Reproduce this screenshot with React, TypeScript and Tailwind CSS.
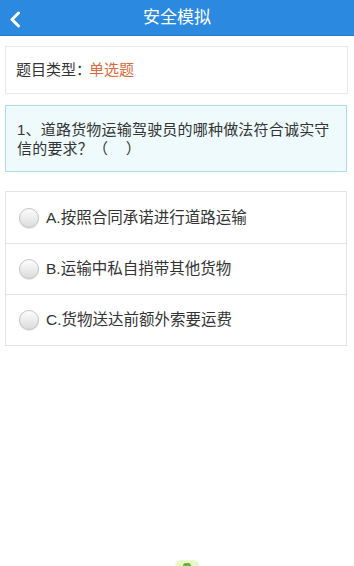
const font = { fontFamily: '"Liberation Sans", "Noto Sans CJK SC", sans-serif' };

const options = [
  'A.按照合同承诺进行道路运输',
  'B.运输中私自捎带其他货物',
  'C.货物送达前额外索要运费',
];

const Radio = () => (
  <span className="block w-[20px] h-[20px] rounded-full border border-[#c4c4c4] bg-gradient-to-b from-[#fdfdfd] to-[#dcdcdc] shadow-[0_1px_1px_rgba(0,0,0,0.12)] shrink-0" />
);

const App = () => {
  return (
    <div className="min-h-[566px] bg-white flex flex-col text-[#333]" style={font}>
      {/* header */}
      <div className="h-[36px] bg-[#2b8ae0] border-b border-[#2478c4] flex items-center relative">
        <button className="absolute left-[8px] top-[10px] w-[14px] h-[18px] flex items-center justify-center">
          <svg width="12" height="17" viewBox="0 0 12 17">
            <polyline points="9.5,2 3,8.5 9.5,15" fill="none" stroke="#fff" strokeWidth="3" strokeLinecap="round" strokeLinejoin="round" />
          </svg>
        </button>
        <h1 className="flex-1 text-center text-white text-[17px] leading-none">安全模拟</h1>
      </div>

      {/* type */}
      <div className="mt-[10px] ml-[5px] mr-[6px] h-[48px] border border-[#e8e8e8] bg-white flex items-center px-[10px] text-[15px]">
        <span className="text-[#333]">题目类型：</span>
        <span className="text-[#d7693c] -ml-[2px]">单选题</span>
      </div>

      {/* question */}
      <div className="mt-[11px] ml-[5px] mr-[7px] border border-[#afdbe6] bg-[#eefafc] px-[11px] pt-[14px] pb-[13px] text-[15px] tracking-[0.2px] leading-[19px] text-[#333]">
        1、道路货物运输驾驶员的哪种做法符合诚实守信的要求？（&nbsp;&nbsp;&nbsp;&nbsp;）
      </div>

      {/* options */}
      <div className="mt-[19px] ml-[5px] mr-[7px] border border-[#e3e3e3] bg-white">
        {options.map((o, i) => (
          <div
            key={i}
            className={`h-[51px] flex items-center pl-[13px] gap-[7px] text-[15.5px] text-[#333] ${i > 0 ? 'border-t border-[#e3e3e3]' : ''}`}
          >
            <Radio />
            <span>{o}</span>
          </div>
        ))}
      </div>

      <div className="flex-1" />
      <div className="flex justify-center">
        <div className="w-[24px] h-[6px] rounded-t-full bg-[#e9f8c8] flex items-end justify-center ml-[20px]">
          <div className="w-[8px] h-[3px] rounded-t-full bg-[#5cb82e]" />
        </div>
      </div>
    </div>
  );
};

export default App;
